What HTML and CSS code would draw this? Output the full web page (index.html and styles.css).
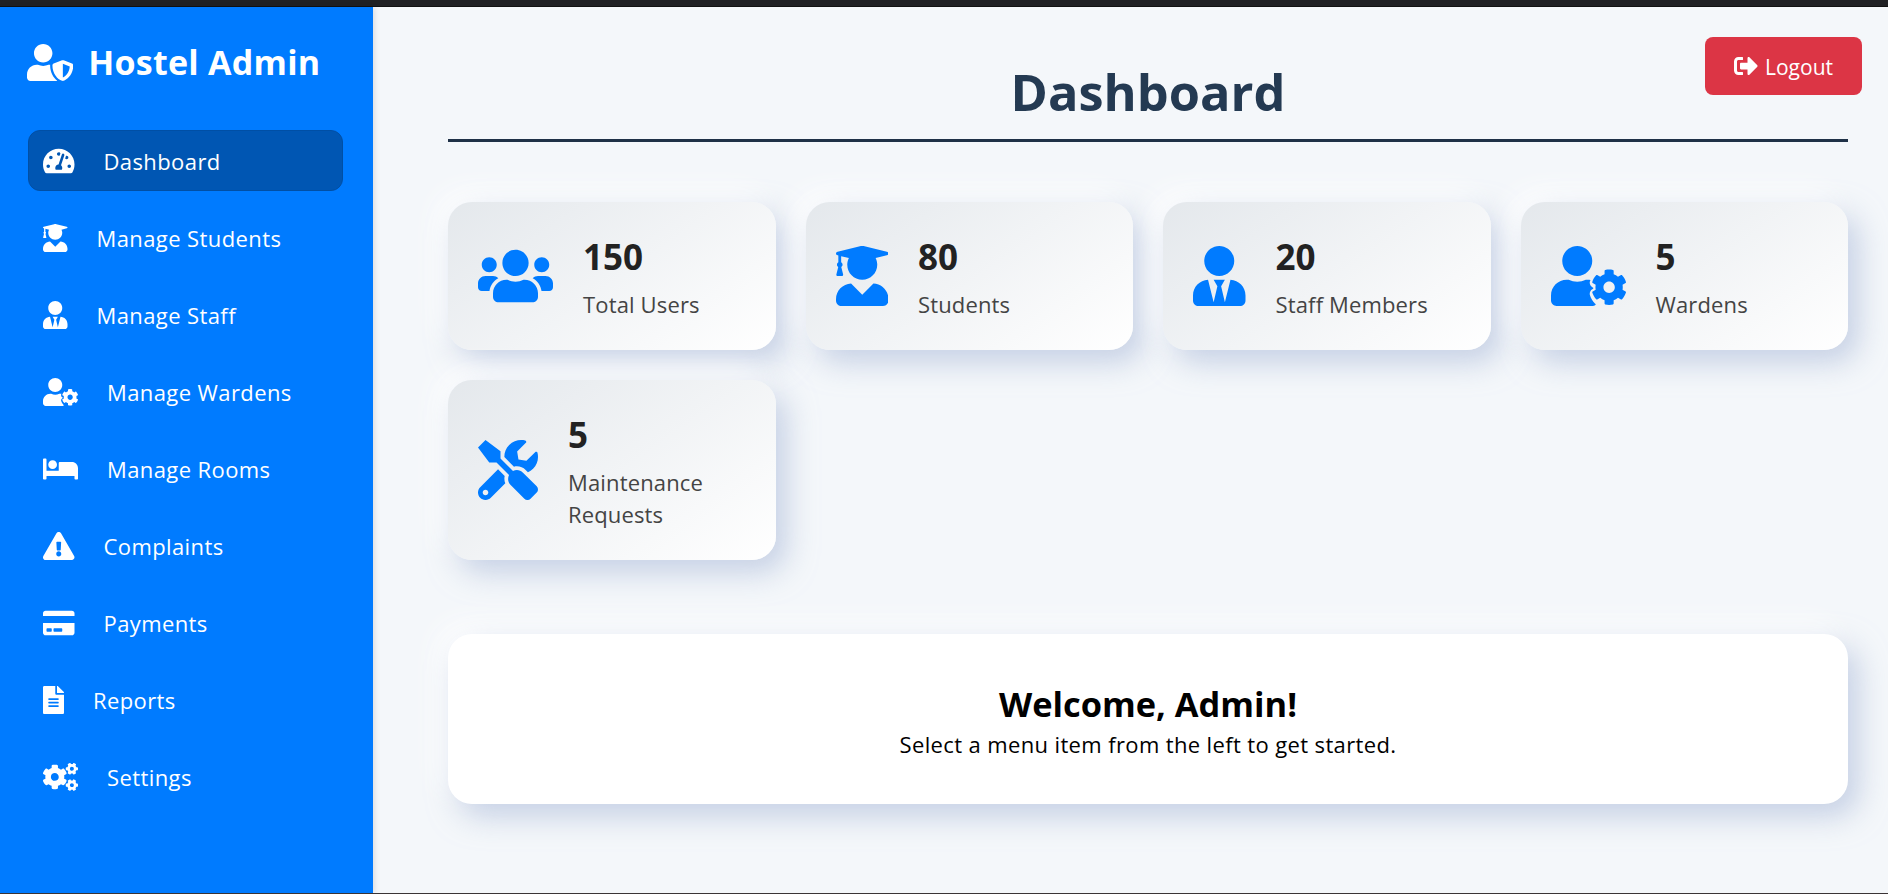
FILE: index.html
```html
<!DOCTYPE html>
<html lang="en">
<head>
    <meta charset="UTF-8">
    <meta name="viewport" content="width=device-width, initial-scale=1.0">
    <title>Hostel Admin Dashboard</title>
    <link rel="stylesheet" href="styles.css">
</head>
<body>

    <!-- Icon shapes, reused in the sidebar and the cards -->
    <svg class="icon-defs" aria-hidden="true">
        <defs>
            <path id="i-shield" d="M622.3 271.1l-115.2-45c-4.1-1.6-12.6-3.7-22.2 0l-115.2 45c-10.7 4.2-17.7 14-17.7 24.9 0 111.6 68.7 188.8 132.9 213.9 9.6 3.7 18 1.6 22.2 0C558.4 489.9 640 420.5 640 296c0-10.9-7-20.7-17.7-24.9zM496 462.4V273.3l95.5 37.3c-5.6 87.1-60.9 135.4-95.5 151.8zM224 256c70.7 0 128-57.3 128-128S294.7 0 224 0 96 57.3 96 128s57.3 128 128 128zm96 40c0-2.5.8-4.8 1.1-7.2-2.5-.1-4.9-.8-7.5-.8h-16.7c-22.2 10.2-46.9 16-72.9 16s-50.6-5.8-72.9-16h-16.7C60.2 288 0 348.2 0 422.4V464c0 26.5 21.5 48 48 48h352c6.8 0 13.3-1.5 19.2-4-54-42.9-99.2-116.7-99.2-212z"/>
            <path id="i-gauge" d="M288 32C128.94 32 0 160.94 0 320c0 52.8 14.25 102.26 39.06 144.8 5.61 9.62 16.3 15.2 27.44 15.2h443c11.14 0 21.83-5.58 27.44-15.2C561.75 422.26 576 372.8 576 320c0-159.06-128.94-288-288-288zm0 64c14.71 0 26.58 10.13 30.32 23.65-1.11 2.26-2.64 4.23-3.45 6.67l-9.22 27.67c-5.13 3.49-10.97 6.01-17.64 6.01-17.67 0-32-14.33-32-32S270.33 96 288 96zM96 384c-17.67 0-32-14.33-32-32s14.33-32 32-32 32 14.33 32 32-14.33 32-32 32zm48-160c-17.67 0-32-14.33-32-32s14.33-32 32-32 32 14.33 32 32-14.33 32-32 32zm246.77-72.41l-61.33 184C343.13 347.33 352 364.54 352 384c0 11.72-3.38 22.55-8.88 32H232.88c-5.5-9.45-8.88-20.28-8.88-32 0-33.94 26.5-61.43 59.9-63.59l61.34-184.01c4.17-12.56 17.73-19.45 30.36-15.17 12.57 4.19 19.35 17.79 15.17 30.36zm14.66 57.2l15.52-46.55c3.47-1.29 7.13-2.23 11.05-2.23 17.67 0 32 14.33 32 32s-14.33 32-32 32c-11.38-.01-20.89-6.28-26.57-15.22zM480 384c-17.67 0-32-14.33-32-32s14.33-32 32-32 32 14.33 32 32-14.33 32-32 32z"/>
            <path id="i-grad" d="M319.4 320.6L224 416l-95.4-95.4C57.1 323.7 0 382.2 0 454.4v9.6c0 26.5 21.5 48 48 48h352c26.5 0 48-21.5 48-48v-9.6c0-72.2-57.1-130.7-128.6-133.8zM13.6 79.8l6.4 1.5v58.4c-7 4.2-12 11.5-12 20.3 0 8.4 4.6 15.4 11.1 19.7L3.5 242c-1.7 6.9 2.1 14 7.6 14h41.8c5.5 0 9.3-7.1 7.6-14l-15.6-62.3C51.4 175.4 56 168.4 56 160c0-8.8-5-16.1-12-20.3V87.1l66 15.9c-8.6 17.2-14 36.4-14 57 0 70.7 57.3 128 128 128s128-57.3 128-128c0-20.6-5.3-39.8-14-57l96.3-23.2c18.2-4.4 18.2-27.1 0-31.5l-190.4-46c-13-3.1-26.7-3.1-39.7 0L13.6 48.2c-18.1 4.4-18.1 27.2 0 31.6z"/>
            <path id="i-tie" d="M224 256c70.7 0 128-57.3 128-128S294.7 0 224 0 96 57.3 96 128s57.3 128 128 128zm95.8 32.6L272 480l-32-136 32-56h-96l32 56-32 136-47.8-191.4C56.9 292 0 350.3 0 422.4V464c0 26.5 21.5 48 48 48h352c26.5 0 48-21.5 48-48v-41.6c0-72.1-56.9-130.4-128.2-133.8z"/>
            <path id="i-cog" d="M610.5 373.3c2.6-14.1 2.6-28.5 0-42.6l25.8-14.9c3-1.7 4.3-5.2 3.3-8.5-6.7-21.6-18.2-41.2-33.2-57.4-2.3-2.5-6-3.1-9-1.4l-25.8 14.9c-10.9-9.3-23.4-16.5-36.9-21.3v-29.8c0-3.4-2.4-6.4-5.7-7.1-22.3-5-45-4.8-66.2 0-3.3.7-5.7 3.7-5.7 7.1v29.8c-13.5 4.8-26 12-36.9 21.3l-25.8-14.9c-2.9-1.7-6.7-1.1-9 1.4-15 16.2-26.5 35.8-33.2 57.4-1 3.3.4 6.8 3.3 8.5l25.8 14.9c-2.6 14.1-2.6 28.5 0 42.6l-25.8 14.9c-3 1.7-4.3 5.2-3.3 8.5 6.7 21.6 18.2 41.1 33.2 57.4 2.3 2.5 6 3.1 9 1.4l25.8-14.9c10.9 9.3 23.4 16.5 36.9 21.3v29.8c0 3.4 2.4 6.4 5.7 7.1 22.3 5 45 4.8 66.2 0 3.3-.7 5.7-3.7 5.7-7.1v-29.8c13.5-4.8 26-12 36.9-21.3l25.8 14.9c2.9 1.7 6.7 1.1 9-1.4 15-16.2 26.5-35.8 33.2-57.4 1-3.3-.4-6.8-3.3-8.5l-25.8-14.9zM496 400.5c-26.8 0-48.5-21.8-48.5-48.5s21.8-48.5 48.5-48.5 48.5 21.8 48.5 48.5-21.7 48.5-48.5 48.5zM224 256c70.7 0 128-57.3 128-128S294.7 0 224 0 96 57.3 96 128s57.3 128 128 128zM0 422.4C0 348.2 60.2 288 134.4 288h16.7c22.3 10.2 46.9 16 72.9 16s50.6-5.8 72.9-16h16.7c7.9 0 15.6.7 23.3 2-1.7 3.7-3.2 7.5-4.4 11.2-6.1 19.6 2.1 40.7 20 51.1l7.9 4.6c-.1 2.6-.1 5.2 0 7.8l-7.9 4.6c-17.9 10.4-26.1 31.5-20 51.1 8 25.6 21.9 49.5 40.1 69.1 3 3.200 6.300 6 9.900 8.300-5.800 9.800-11.600 14.100-24.500 14.100H48c-26.500 0-48-21.500-48-48z"/>
            <path id="i-bed" d="M176 256c44.11 0 80-35.89 80-80s-35.89-80-80-80-80 35.89-80 80 35.89 80 80 80zm352-128H304c-8.84 0-16 7.16-16 16v144H64V80c0-8.84-7.16-16-16-16H16C7.16 64 0 71.16 0 80v352c0 8.84 7.16 16 16 16h32c8.84 0 16-7.16 16-16v-48h512v48c0 8.84 7.16 16 16 16h32c8.84 0 16-7.16 16-16V240c0-61.86-50.14-112-112-112z"/>
            <path id="i-warn" d="M569.517 440.013C587.975 472.007 564.806 512 527.94 512H48.054c-36.937 0-59.999-40.055-41.577-71.987L246.423 24.028c18.467-32.009 64.72-31.951 83.154 0l239.94 416.73zM288 354c-25.405 0-46 20.595-46 46s20.595 46 46 46 46-20.595 46-46-20.595-46-46-46zm-43.673-165.346l7.418 136c.347 6.364 5.609 11.346 11.982 11.346h48.546c6.373 0 11.635-4.982 11.982-11.346l7.418-136c.375-6.874-5.098-12.654-11.982-12.654h-63.383c-6.884 0-12.356 5.78-11.981 12.654z"/>
            <path id="i-card" d="M0 432c0 26.5 21.5 48 48 48h480c26.5 0 48-21.5 48-48V256H0v176zm192-68c0-6.6 5.4-12 12-12h136c6.6 0 12 5.4 12 12v40c0 6.6-5.4 12-12 12H204c-6.6 0-12-5.4-12-12v-40zm-128 0c0-6.6 5.4-12 12-12h72c6.6 0 12 5.4 12 12v40c0 6.6-5.4 12-12 12H76c-6.6 0-12-5.4-12-12v-40zM576 80v48H0V80c0-26.5 21.5-48 48-48h480c26.5 0 48 21.5 48 48z"/>
            <path id="i-file" d="M224 136V0H24C10.7 0 0 10.7 0 24v464c0 13.3 10.7 24 24 24h336c13.3 0 24-10.7 24-24V160H248c-13.2 0-24-10.8-24-24zm64 236c0 6.6-5.4 12-12 12H108c-6.6 0-12-5.4-12-12v-8c0-6.6 5.4-12 12-12h168c6.6 0 12 5.4 12 12v8zm0-64c0 6.6-5.4 12-12 12H108c-6.6 0-12-5.4-12-12v-8c0-6.6 5.4-12 12-12h168c6.6 0 12 5.4 12 12v8zm0-72v8c0 6.6-5.4 12-12 12H108c-6.6 0-12-5.4-12-12v-8c0-6.6 5.4-12 12-12h168c6.6 0 12 5.4 12 12zm96-114.1v6.1H256V0h6.1c6.4 0 12.5 2.5 17 7l97.9 98c4.5 4.5 7 10.6 7 16.9z"/>
            <path id="i-cogs" d="M512.1 191l-8.2 14.3c-3 5.3-9.4 7.5-15.1 5.4-11.8-4.4-22.6-10.7-32.1-18.6-4.6-3.8-5.8-10.5-2.8-15.7l8.2-14.3c-6.9-8-12.3-17.3-15.9-27.4h-16.5c-6 0-11.2-4.3-12.2-10.3-2-12-2.1-24.6 0-37.1 1-6 6.2-10.4 12.2-10.4h16.5c3.6-10.1 9-19.4 15.9-27.4l-8.2-14.3c-3-5.2-1.9-11.9 2.8-15.7 9.5-7.9 20.4-14.2 32.1-18.6 5.7-2.1 12.1.1 15.1 5.4l8.2 14.3c10.5-1.9 21.2-1.9 31.7 0L552 6.3c3-5.3 9.4-7.5 15.1-5.4 11.8 4.4 22.6 10.7 32.1 18.6 4.6 3.8 5.8 10.5 2.8 15.7l-8.2 14.3c6.9 8 12.3 17.3 15.9 27.4h16.5c6 0 11.2 4.3 12.2 10.3 2 12 2.1 24.6 0 37.1-1 6-6.2 10.4-12.2 10.4h-16.5c-3.6 10.1-9 19.4-15.9 27.4l8.2 14.3c3 5.2 1.9 11.9-2.8 15.7-9.5 7.9-20.4 14.2-32.1 18.6-5.7 2.1-12.1-.1-15.1-5.4l-8.2-14.3c-10.4 1.9-21.2 1.9-31.7 0zm-10.5-58.8c38.5 29.6 82.4-14.3 52.8-52.8-38.5-29.7-82.4 14.3-52.8 52.8zM386.3 286.1l33.7 16.8c10.1 5.8 14.5 18.1 10.5 29.1-8.9 24.2-26.4 46.4-42.6 65.8-7.4 8.9-20.2 11.1-30.3 5.3l-29.1-16.8c-16 13.7-34.6 24.6-54.9 31.7v33.6c0 11.6-8.3 21.6-19.7 23.6-24.6 4.2-50.4 4.4-75.9 0-11.5-2-20-11.9-20-23.6V418c-20.3-7.2-38.9-18-54.9-31.7L74 403c-10 5.8-22.9 3.6-30.3-5.3-16.2-19.4-33.3-41.6-42.2-65.7-4-10.9.4-23.2 10.5-29.1l33.3-16.8c-3.9-20.9-3.9-42.4 0-63.4L12 205.8c-10.1-5.8-14.6-18.1-10.5-29 8.9-24.2 26-46.4 42.2-65.8 7.4-8.9 20.2-11.1 30.3-5.3l29.1 16.8c16-13.7 34.6-24.6 54.9-31.7V57.1c0-11.5 8.2-21.5 19.6-23.5 24.6-4.2 50.5-4.4 76-.1 11.5 2 20 11.9 20 23.6v33.6c20.3 7.2 38.9 18 54.9 31.7l29.1-16.8c10-5.8 22.9-3.6 30.3 5.3 16.2 19.4 33.2 41.6 42.1 65.8 4 10.9.1 23.2-10 29.1l-33.7 16.8c3.9 21 3.9 42.5 0 63.5zm-117.6 21.1c59.2-77-28.7-164.9-105.7-105.7-59.2 77 28.7 164.9 105.7 105.7zm243.4 182.7l-8.2 14.3c-3 5.3-9.4 7.5-15.1 5.4-11.8-4.4-22.6-10.7-32.1-18.6-4.6-3.8-5.8-10.5-2.8-15.7l8.2-14.3c-6.9-8-12.3-17.3-15.9-27.4h-16.5c-6 0-11.2-4.3-12.2-10.3-2-12-2.1-24.6 0-37.1 1-6 6.2-10.4 12.2-10.4h16.5c3.6-10.1 9-19.4 15.9-27.4l-8.2-14.3c-3-5.2-1.9-11.9 2.8-15.7 9.5-7.9 20.4-14.2 32.1-18.6 5.7-2.1 12.1.1 15.1 5.4l8.2 14.3c10.5-1.9 21.2-1.9 31.7 0l8.2-14.3c3-5.3 9.4-7.5 15.1-5.4 11.8 4.4 22.6 10.7 32.1 18.6 4.6 3.8 5.8 10.5 2.8 15.7l-8.2 14.3c6.9 8 12.3 17.3 15.9 27.4h16.5c6 0 11.2 4.3 12.2 10.3 2 12 2.1 24.6 0 37.1-1 6-6.2 10.4-12.2 10.4h-16.5c-3.6 10.1-9 19.4-15.9 27.4l8.2 14.3c3 5.2 1.9 11.9-2.8 15.7-9.5 7.9-20.4 14.2-32.1 18.6-5.7 2.1-12.1-.1-15.1-5.4l-8.2-14.3c-10.4 1.9-21.2 1.9-31.7 0zM501.6 431c38.5 29.6 82.4-14.3 52.8-52.8-38.5-29.6-82.4 14.3-52.8 52.8z"/>
            <path id="i-users" d="M96 224c35.3 0 64-28.7 64-64s-28.7-64-64-64-64 28.7-64 64 28.7 64 64 64zm448 0c35.3 0 64-28.7 64-64s-28.7-64-64-64-64 28.7-64 64 28.7 64 64 64zm32 32h-64c-17.6 0-33.5 7.1-45.1 18.6 40.3 22.1 68.9 62 75.1 109.4h66c17.7 0 32-14.3 32-32v-32c0-35.3-28.7-64-64-64zm-256 0c61.9 0 112-50.1 112-112S381.9 32 320 32 208 82.1 208 144s50.1 112 112 112zm76.8 32h-8.3c-20.8 10-43.9 16-68.5 16s-47.6-6-68.5-16h-8.3C179.6 288 128 339.6 128 403.2V432c0 26.5 21.5 48 48 48h288c26.5 0 48-21.5 48-48v-28.8c0-63.6-51.6-115.2-115.2-115.2zm-223.7-13.4C161.5 263.1 145.6 256 128 256H64c-35.3 0-64 28.7-64 64v32c0 17.7 14.3 32 32 32h65.9c6.3-47.4 34.9-87.3 75.2-109.4z"/>
            <path id="i-tools" d="M501.1 395.7L384 278.6c-23.1-23.1-57.6-27.6-85.4-13.9L192 158.1V96L64 0 0 64l96 128h62.1l106.6 106.6c-13.6 27.8-9.2 62.3 13.9 85.4l117.1 117.1c14.6 14.6 38.2 14.6 52.7 0l52.7-52.7c14.5-14.6 14.5-38.2 0-52.7zM331.7 225c28.3 0 54.9 11 74.9 31l19.4 19.4c15.8-6.9 30.8-16.5 43.8-29.5 37.1-37.1 49.7-89.3 37.9-136.7-2.2-9-13.5-12.1-20.1-5.5l-74.4 74.4-67.9-11.3L334 98.9l74.4-74.4c6.6-6.6 3.4-17.9-5.7-20.2-47.4-11.7-99.6.9-136.6 37.9-28.5 28.5-41.9 66.1-41.2 103.6l82.1 82.1c8.1-1.9 16.5-2.9 24.7-2.9zm-103.9 82l-56.7-56.7L18.7 402.8c-25 25-25 65.5 0 90.5s65.5 25 90.5 0l123.6-123.6c-7.6-19.9-9.9-41.6-5-62.7zM64 472c-13.2 0-24-10.8-24-24 0-13.3 10.7-24 24-24s24 10.7 24 24c0 13.2-10.7 24-24 24z"/>
            <path id="i-logout" d="M497 273L329 441c-15 15-41 4.5-41-17v-96H152c-13.3 0-24-10.7-24-24v-96c0-13.3 10.7-24 24-24h136V88c0-21.4 25.9-32 41-17l168 168c9.3 9.4 9.3 24.6 0 34zM192 436v-40c0-6.6-5.4-12-12-12H96c-17.7 0-32-14.3-32-32V160c0-17.7 14.3-32 32-32h84c6.6 0 12-5.4 12-12V76c0-6.6-5.4-12-12-12H96c-53 0-96 43-96 96v192c0 53 43 96 96 96h84c6.6 0 12-5.4 12-12z"/>
        </defs>
    </svg>

    <div class="top-strip"></div>

    <div class="layout">
        <aside class="sidebar">
            <h2 class="brand">
                <svg class="icon" viewBox="0 0 640 512"><use href="#i-shield"/></svg>
                Hostel Admin
            </h2>
            <nav class="menu">
                <a class="menu-item active" href="#"><svg class="icon" viewBox="0 0 576 512"><use href="#i-gauge"/></svg><span>Dashboard</span></a>
                <a class="menu-item" href="#"><svg class="icon" viewBox="0 0 448 512"><use href="#i-grad"/></svg><span>Manage Students</span></a>
                <a class="menu-item" href="#"><svg class="icon" viewBox="0 0 448 512"><use href="#i-tie"/></svg><span>Manage Staff</span></a>
                <a class="menu-item" href="#"><svg class="icon" viewBox="0 0 640 512"><use href="#i-cog"/></svg><span>Manage Wardens</span></a>
                <a class="menu-item" href="#"><svg class="icon" viewBox="0 0 640 512"><use href="#i-bed"/></svg><span>Manage Rooms</span></a>
                <a class="menu-item" href="#"><svg class="icon" viewBox="0 0 576 512"><use href="#i-warn"/></svg><span>Complaints</span></a>
                <a class="menu-item" href="#"><svg class="icon" viewBox="0 0 576 512"><use href="#i-card"/></svg><span>Payments</span></a>
                <a class="menu-item" href="#"><svg class="icon" viewBox="0 0 384 512"><use href="#i-file"/></svg><span>Reports</span></a>
                <a class="menu-item" href="#"><svg class="icon" viewBox="0 0 640 512"><use href="#i-cogs"/></svg><span>Settings</span></a>
            </nav>
        </aside>

        <main class="content">
            <a class="logout" href="#"><svg class="icon" viewBox="0 0 512 512"><use href="#i-logout"/></svg><span>Logout</span></a>

            <h1 class="page-title">Dashboard</h1>

            <section class="stats">
                <div class="stat-card">
                    <svg class="icon" viewBox="0 0 640 512"><use href="#i-users"/></svg>
                    <div><h3>150</h3><p>Total Users</p></div>
                </div>
                <div class="stat-card">
                    <svg class="icon" viewBox="0 0 448 512"><use href="#i-grad"/></svg>
                    <div><h3>80</h3><p>Students</p></div>
                </div>
                <div class="stat-card">
                    <svg class="icon" viewBox="0 0 448 512"><use href="#i-tie"/></svg>
                    <div><h3>20</h3><p>Staff Members</p></div>
                </div>
                <div class="stat-card">
                    <svg class="icon" viewBox="0 0 640 512"><use href="#i-cog"/></svg>
                    <div><h3>5</h3><p>Wardens</p></div>
                </div>
                <div class="stat-card">
                    <svg class="icon" viewBox="0 0 512 512"><use href="#i-tools"/></svg>
                    <div><h3>5</h3><p>Maintenance Requests</p></div>
                </div>
            </section>

            <section class="welcome">
                <h2>Welcome, Admin!</h2>
                <p>Select a menu item from the left to get started.</p>
            </section>
        </main>
    </div>

    <div class="bottom-strip"></div>

</body>
</html>
```

FILE: styles.css
```css
* {
    box-sizing: border-box;
}

html, body {
    height: 100%;
}

body {
    margin: 0;
    display: flex;
    flex-direction: column;
    font-family: "Open Sans", "Noto Sans", sans-serif;
    background-color: #f4f7fa;
    overflow: hidden;
}

.icon-defs {
    display: none;
}

.icon {
    display: block;
    height: 1em;
    fill: currentColor;
    flex-shrink: 0;
}

.top-strip {
    height: 7px;
    background-color: #202124;
    border-bottom: 1px solid #111;
}

.bottom-strip {
    height: 1px;
    background-color: #3a3436;
}

.layout {
    flex: 1;
    display: flex;
    min-height: 0;
}

/* Sidebar */
.sidebar {
    width: 373px;
    flex-shrink: 0;
    padding: 30px 30px 0 28px;
    background-color: #007bff;
    color: white;
    box-shadow: 2px 0 5px rgba(0, 0, 0, 0.1);
}

.brand {
    display: flex;
    align-items: center;
    gap: 15px;
    height: 50px;
    margin: 0 0 43px -1px;
    font-size: 34px;
    letter-spacing: 0.25px;
    font-weight: 700;
}

.brand .icon {
    font-size: 37px;
}

.menu {
    display: flex;
    flex-direction: column;
    gap: 16px;
}

.menu-item {
    display: flex;
    align-items: center;
    gap: 29px;
    height: 61px;
    padding: 0 14px;
    border: 1px solid transparent;
    border-radius: 12px;
    color: white;
    text-decoration: none;
    font-size: 22px;
    letter-spacing: 0.4px;
}

.menu-item span {
    margin-top: 1px;
}

.menu-item .icon {
    font-size: 28px;
}

.menu-item.active {
    background-color: #0056b3;
    border-color: #004fa5;
}

/* Main area */
.content {
    flex: 1;
    position: relative;
    padding: 50px 40px 0 75px;
}

.logout {
    position: absolute;
    top: 30px;
    right: 26px;
    display: flex;
    align-items: center;
    gap: 7px;
    height: 58px;
    padding: 0 29px;
    border-radius: 8px;
    background-color: #dc3545;
    color: white;
    text-decoration: none;
    font-size: 21px;
}

.logout span {
    margin-top: 2px;
}

.logout .icon {
    font-size: 24px;
}

.page-title {
    margin: 0 0 60px;
    padding-bottom: 13px;
    border-bottom: 3px solid #1f3147;
    text-align: center;
    font-size: 50.5px;
    line-height: 69px;
    font-weight: 700;
    color: #243a52;
}

.stats {
    display: grid;
    grid-template-columns: repeat(4, 1fr);
    gap: 30px;
    align-items: start;
}

.stat-card {
    display: flex;
    align-items: center;
    gap: 30px;
    padding: 30px;
    border-radius: 24px;
    background: linear-gradient(145deg, #e4e8ec, #ffffff);
    box-shadow: 10px 12px 30px rgba(170, 186, 216, 0.65), -10px -10px 30px #ffffff;
}

.stat-card .icon {
    font-size: 60px;
    color: #007bff;
}

.stat-card h3 {
    margin: 0 0 6px;
    font-size: 35px;
    line-height: 50px;
    font-weight: 700;
    color: #222;
}

.stat-card p {
    margin: 0;
    font-size: 22px;
    letter-spacing: 0.15px;
    line-height: 32px;
    color: #444;
}

.welcome {
    margin-top: 74px;
    padding: 46px 42px 43px;
    border-radius: 24px;
    background-color: white;
    text-align: center;
    color: black;
    box-shadow: 10px 12px 30px rgba(170, 186, 216, 0.65), -10px -10px 30px #ffffff;
}

.welcome h2 {
    margin: 0;
    font-size: 34.4px;
    line-height: 48px;
    font-weight: 700;
}

.welcome p {
    margin: 0;
    font-size: 22px;
    letter-spacing: 0.37px;
    line-height: 33px;
}
```
